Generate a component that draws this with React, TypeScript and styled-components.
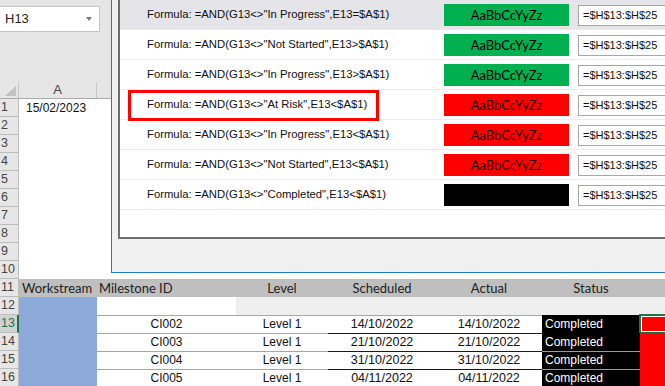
import * as React from "react";
import styled, { createGlobalStyle } from "styled-components";

const GREEN = "#00b050";
const RED = "#ff0000";
const EXCEL_GREEN = "#217346";

const rules = [
  { status: "In Progress", op: "=", fill: GREEN, selected: true },
  { status: "Not Started", op: ">", fill: GREEN },
  { status: "In Progress", op: ">", fill: GREEN },
  { status: "At Risk", op: "<", fill: RED, flagged: true },
  { status: "In Progress", op: "<", fill: RED },
  { status: "Not Started", op: "<", fill: RED },
  { status: "Completed", op: "<", fill: "#000000" },
];

const milestones = [
  { id: "CI002", date: "14/10/2022" },
  { id: "CI003", date: "21/10/2022" },
  { id: "CI004", date: "31/10/2022" },
  { id: "CI005", date: "04/11/2022" },
];

const App: React.FC = () => {
  return (
    <Screen>
      <GlobalStyle />
      <Toolbar>
        <NameBox>
          H13
          <Caret />
        </NameBox>
      </Toolbar>

      <ColumnHeaders>
        <Corner>
          <CornerMark />
        </Corner>
        <ColLetter>A</ColLetter>
        <ColLetter />
      </ColumnHeaders>

      {Array.from({ length: 10 }, (_, i) => (
        <SheetRow key={i}>
          <RowHead>{i + 1}</RowHead>
          <Cell $pad={7}>{i === 0 ? "15/02/2023" : ""}</Cell>
        </SheetRow>
      ))}

      <SheetRow>
        <RowHead>11</RowHead>
        <HeadCell $pad={3}>Workstream</HeadCell>
        <HeadCell $pad={2}>Milestone ID</HeadCell>
        <HeadCell $center>Level</HeadCell>
        <HeadCell $center>Scheduled</HeadCell>
        <HeadCell $center>Actual</HeadCell>
        <HeadCell $center>Status</HeadCell>
        <HeadCell />
      </SheetRow>

      <SheetRow>
        <RowHead>12</RowHead>
        <Cell $bg="#8eaadb" />
        <Cell />
        <Cell $bg="#efefef" />
        <Cell $bg="#efefef" />
        <Cell $bg="#efefef" />
        <Cell $bg="#efefef" />
        <Cell $bg="#efefef" />
      </SheetRow>

      {milestones.map((m, i) => (
        <SheetRow key={m.id}>
          <RowHead $active={i === 0}>{13 + i}</RowHead>
          <Cell $bg="#8eaadb" />
          <Cell $center $line="#a6a6a6">{m.id}</Cell>
          <Cell $center $line="#a6a6a6">Level 1</Cell>
          <Cell $center $line={i === 0 ? "#a6a6a6" : "#1a1a1a"} $date>
            {m.date}
          </Cell>
          <Cell $center $line={i === 0 ? "#a6a6a6" : "#1a1a1a"} $date>
            {m.date}
          </Cell>
          <Cell $bg="#000" $color="#fff" $pad={3} $line={i > 1 ? "#9a9a9a" : undefined}>
            Completed
          </Cell>
          <Cell $bg={RED}>{i === 0 && <Selection />}</Cell>
        </SheetRow>
      ))}

      <Dialog>
        <RuleList>
          {rules.map((r, i) => (
            <RuleRow key={i} $selected={r.selected}>
              <RuleText>{`Formula: =AND(G13<>"${r.status}",E13${r.op}$A$1)`}</RuleText>
              <Swatch $fill={r.fill}>AaBbCcYyZz</Swatch>
              <AppliesTo>=$H$13:$H$25</AppliesTo>
              {r.flagged && <Callout />}
            </RuleRow>
          ))}
        </RuleList>
      </Dialog>
    </Screen>
  );
};

export default App;

const GlobalStyle = createGlobalStyle`
  body {
    margin: 0;
    background: #fff;
    font-family: "Liberation Sans", Arial, sans-serif;
  }
`;

const Screen = styled.div`
  position: relative;
  width: 665px;
  height: 386px;
  overflow: hidden;
  background: #fff;
`;

const Toolbar = styled.div`
  height: 82px;
  box-sizing: border-box;
  padding-top: 6px;
  background: #e6e6e6;
`;

const NameBox = styled.div`
  position: relative;
  width: 100px;
  height: 26px;
  box-sizing: border-box;
  border: 1px solid #c6c6c6;
  border-left: none;
  background: #fff;
  padding-left: 5px;
  font-size: 13px;
  line-height: 24px;
  color: #222;
`;

const Caret = styled.span`
  position: absolute;
  right: 7px;
  top: 10px;
  border-left: 3.5px solid transparent;
  border-right: 3.5px solid transparent;
  border-top: 4px solid #7a7a7a;
`;

const ColumnHeaders = styled.div`
  display: grid;
  grid-template-columns: 19px 78px 1fr;
  height: 16px;
  background: #e6e6e6;
  border-bottom: 1px solid #ababab;
`;

const Corner = styled.div`
  display: flex;
  align-items: flex-end;
  justify-content: flex-end;
  padding: 0 2px 2px 0;
  border-right: 1px solid #c8c8c8;
`;

const CornerMark = styled.span`
  border-left: 11px solid transparent;
  border-bottom: 10px solid #c2c2c2;
`;

const ColLetter = styled.div`
  text-align: center;
  font-size: 13px;
  line-height: 16px;
  color: #444;
  border-right: 1px solid #c8c8c8;
  &:last-child {
    border-right: none;
  }
`;

const SheetRow = styled.div`
  display: grid;
  grid-template-columns: 19px 78px 139px 92px 108px 106px 98px 1fr;
  height: 18px;
`;

const RowHead = styled.div<{ $active?: boolean }>`
  box-sizing: border-box;
  padding-left: 1px;
  font-size: 12.5px;
  line-height: 17px;
  color: ${p => (p.$active ? EXCEL_GREEN : "#444")};
  background: ${p => (p.$active ? "#d2d2d2" : "#e6e6e6")};
  border-bottom: 1px solid #bdbdbd;
  border-right: ${p => (p.$active ? `2px solid ${EXCEL_GREEN}` : "1px solid #bdbdbd")};
`;

const Cell = styled.div<{
  $bg?: string;
  $color?: string;
  $center?: boolean;
  $pad?: number;
  $line?: string;
  $date?: boolean;
}>`
  position: relative;
  box-sizing: border-box;
  background: ${p => p.$bg || "#fff"};
  color: ${p => p.$color || "#111"};
  text-align: ${p => (p.$center ? "center" : "left")};
  padding-left: ${p => p.$pad || 0}px;
  border-top: ${p => (p.$line ? `1px solid ${p.$line}` : "none")};
  font-size: ${p => (p.$date ? "12.5px" : "12px")};
  line-height: ${p => (p.$line ? "17px" : "18px")};
  white-space: nowrap;
  overflow: visible;
`;

const HeadCell = styled.div<{ $center?: boolean; $pad?: number }>`
  background: #bfbfbf;
  color: #222;
  font-family: Lato, "Liberation Sans", sans-serif;
  font-size: 13px;
  line-height: 18px;
  text-align: ${p => (p.$center ? "center" : "left")};
  padding-left: ${p => p.$pad || 0}px;
  white-space: nowrap;
`;

const Selection = styled.span`
  position: absolute;
  left: -1px;
  top: -1px;
  right: -4px;
  bottom: -1px;
  border: 2px solid ${EXCEL_GREEN};
  box-shadow: inset 0 0 0 1px #fff;
`;

const Dialog = styled.div`
  position: absolute;
  left: 111px;
  top: 0;
  width: 600px;
  height: 273px;
  box-sizing: border-box;
  padding-left: 6px;
  background: #f0f0f0;
  border-left: 1px solid #1e7bd4;
  border-bottom: 1px solid #1e7bd4;
`;

const RuleList = styled.div`
  height: 239px;
  box-sizing: border-box;
  background: #fff;
  border-left: 2px solid #6f6f6f;
  border-bottom: 2px solid #6f6f6f;
`;

const RuleRow = styled.div<{ $selected?: boolean }>`
  position: relative;
  display: flex;
  align-items: flex-start;
  height: 30px;
  box-sizing: border-box;
  border-bottom: 1px solid #ebebeb;
  background: ${p => (p.$selected ? "#e4e4e9" : "#fff")};
`;

const RuleText = styled.div`
  flex: 0 0 297px;
  padding-left: 27px;
  font-size: 11.3px;
  line-height: 29px;
  color: #111;
  white-space: nowrap;
`;

const Swatch = styled.div<{ $fill: string }>`
  flex: 0 0 125px;
  height: 22px;
  margin-top: 4px;
  background: ${p => p.$fill};
  color: ${p => (p.$fill === RED ? "#2a0000" : "#000")};
  font-family: Lato, "Liberation Sans", sans-serif;
  font-size: 13px;
  line-height: 22px;
  text-align: center;
`;

const AppliesTo = styled.div`
  flex: 0 0 200px;
  height: 21px;
  margin: 5px 0 0 9px;
  box-sizing: border-box;
  border: 1px solid #a6a6a6;
  background: #fff;
  padding-left: 4px;
  font-size: 11px;
  line-height: 19px;
  color: #111;
`;

const Callout = styled.span`
  position: absolute;
  left: 8px;
  top: 0;
  width: 251px;
  height: 31px;
  box-sizing: border-box;
  border: 3px solid ${RED};
  z-index: 1;
`;
